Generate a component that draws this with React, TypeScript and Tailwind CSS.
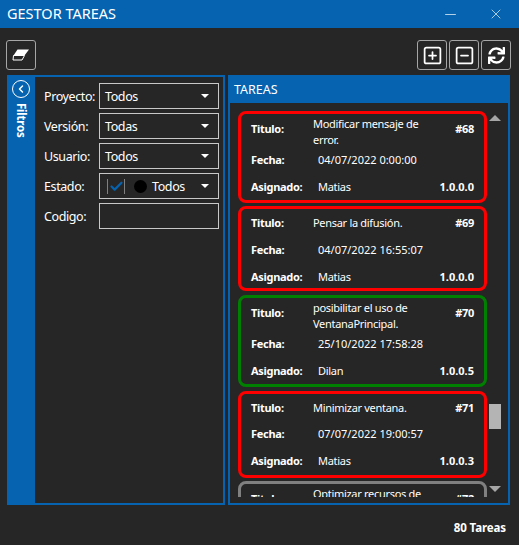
import { Check, ChevronLeft, Minus, SquareMinus, SquarePlus, X } from 'lucide-react'
import { FaSync } from 'react-icons/fa'

const tasks = [
  { title: 'Modificar mensaje de error.', id: '#68', date: '04/07/2022 0:00:00', user: 'Matias', version: '1.0.0.0', border: 'border-[#ff0000]', h: 'h-[92px]', first: 'h-[33px] pt-[7px]', titleClass: '-mt-[5px]', gap: 'mb-[3px]' },
  { title: 'Pensar la difusión.', id: '#69', date: '04/07/2022 16:55:07', user: 'Matias', version: '1.0.0.0', border: 'border-[#ff0000]', h: 'h-[85px]', first: 'h-[28px] pt-[6px]', titleClass: '', gap: 'mb-[4px]' },
  { title: 'posibilitar el uso de VentanaPrincipal.', id: '#70', date: '25/10/2022 17:58:28', user: 'Dilan', version: '1.0.0.5', border: 'border-[#008000]', h: 'h-[92px]', first: 'h-[33px] pt-[7px]', titleClass: '-mt-[5px]', gap: 'mb-[4px]' },
  { title: 'Minimizar ventana.', id: '#71', date: '07/07/2022 19:00:57', user: 'Matias', version: '1.0.0.3', border: 'border-[#ff0000]', h: 'h-[87px]', first: 'h-[27px] pt-[6px]', titleClass: '', gap: 'mb-[3px]' },
  { title: 'Optimizar recursos de sistema.', id: '#72', date: '07/07/2022 19:00:57', user: 'Matias', version: '1.0.0.3', border: 'border-[#808080]', h: 'h-[92px]', first: 'h-[33px] pt-[7px]', titleClass: '-mt-[5px]', gap: '' },
]

function Eraser() {
  return (
    <svg width="18" height="12" viewBox="0 0 18 12">
      <path d="M5.5 0.5H17L12.5 6.5H1.5Z" fill="#fff" />
      <path d="M1.5 6.5H12.5L10 11H1Z" fill="#262626" stroke="#fff" strokeWidth="1" />
    </svg>
  )
}

function ToolButton({ children }: { children: React.ReactNode }) {
  return (
    <button className="flex h-[30px] w-[30px] items-center justify-center rounded-[3px] border border-[#a6a6a6] bg-[#262626] text-white">
      {children}
    </button>
  )
}

function Field({ label, children }: { label: string; children: React.ReactNode }) {
  return (
    <div className="flex h-[30px] items-center">
      <span className="w-[55px] pt-[2px] text-[12.5px] tracking-[-0.4px] text-white">{label}</span>
      {children}
    </div>
  )
}

function Select({ value }: { value: string }) {
  return (
    <div className="flex h-[26px] w-[120px] items-center justify-between border border-[#c8c8c8] pr-[9px] pl-[5px] text-[12.5px] tracking-[-0.4px] text-white">
      <span className="pt-[2px]">{value}</span>
      <span className="h-0 w-0 border-x-[4px] border-t-[4px] border-x-transparent border-t-white" />
    </div>
  )
}

function TaskCard({ task }: { task: (typeof tasks)[number] }) {
  return (
    <div className={`${task.h} ${task.gap} ${task.border} shrink-0 rounded-[8px] border-[3px] pr-[10px] pl-[10px] text-[11px] tracking-[-0.3px] text-white`}>
      <div className={`${task.first} flex items-start`}>
        <span className="w-[62px] shrink-0 font-bold">Titulo:</span>
        <span className={`${task.titleClass} w-[115px] shrink-0 leading-[16px]`}>{task.title}</span>
        <span className="ml-auto font-bold">{task.id}</span>
      </div>
      <div className="flex h-[26px] items-center">
        <span className="w-[67px] shrink-0 font-bold">Fecha:</span>
        <span className="tracking-normal">{task.date}</span>
      </div>
      <div className="flex h-[29px] items-center">
        <span className="w-[67px] shrink-0 font-bold">Asignado:</span>
        <span>{task.user}</span>
        <span className="ml-auto font-bold tracking-normal">{task.version}</span>
      </div>
    </div>
  )
}

export default function App() {
  return (
    <div className="flex h-[545px] w-[519px] flex-col overflow-hidden bg-[#262626] font-['Noto_Sans',sans-serif]">
      <header className="flex h-[28px] shrink-0 items-center justify-between bg-[#0563af] pr-[15px] pl-[7px] text-white">
        <span className="text-[14.5px]">GESTOR TAREAS</span>
        <div className="flex items-center gap-[29px]">
          <Minus size={17} strokeWidth={1} />
          <X size={16} strokeWidth={1} />
        </div>
      </header>

      <div className="flex h-[47px] shrink-0 items-start justify-between pt-[12px] pr-[8px] pl-[6px]">
        <ToolButton>
          <Eraser />
        </ToolButton>
        <div className="flex gap-[2px]">
          <ToolButton>
            <SquarePlus size={21} strokeWidth={2} />
          </ToolButton>
          <ToolButton>
            <SquareMinus size={21} strokeWidth={2} />
          </ToolButton>
          <ToolButton>
            <FaSync size={17} />
          </ToolButton>
        </div>
      </div>

      <main className="flex h-[430px] shrink-0 gap-[3px] pr-[9px] pl-[7px]">
        <section className="flex w-[218px] border-2 border-[#0563af]">
          <div className="flex w-[26px] shrink-0 flex-col items-center bg-[#0563af] pt-[3px] pr-[2px] text-white">
            <span className="flex h-[18px] w-[18px] items-center justify-center rounded-full border-[1.5px] border-white">
              <ChevronLeft size={12} strokeWidth={3} />
            </span>
            <span className="mt-[5px] text-[11.5px] font-bold tracking-[-0.2px] [writing-mode:vertical-rl]">Filtros</span>
          </div>
          <div className="flex flex-1 flex-col pt-[4px] pl-[9px]">
            <Field label="Proyecto:"><Select value="Todos" /></Field>
            <Field label="Versión:"><Select value="Todas" /></Field>
            <Field label="Usuario:"><Select value="Todos" /></Field>
            <Field label="Estado:">
              <div className="flex h-[26px] w-[120px] items-center border border-[#c8c8c8] pr-[9px] pl-[7px] text-[12.5px] tracking-[-0.4px] text-white">
                <span className="flex h-[15px] w-[18px] items-center justify-center border-x border-[#808080]">
                  <Check size={15} strokeWidth={3.5} className="text-[#0563af]" />
                </span>
                <span className="ml-[9px] h-[13px] w-[13px] rounded-full bg-black" />
                <span className="ml-[5px] pt-[2px]">Todos</span>
                <span className="ml-auto h-0 w-0 border-x-[4px] border-t-[4px] border-x-transparent border-t-white" />
              </div>
            </Field>
            <Field label="Codigo:">
              <div className="h-[26px] w-[120px] border border-[#c8c8c8]" />
            </Field>
          </div>
        </section>

        <section className="flex flex-1 flex-col border-2 border-[#0563af]">
          <div className="flex h-[26px] shrink-0 items-center bg-[#0563af] pl-[4px] text-[12.5px] text-white">TAREAS</div>
          <div className="flex min-h-0 flex-1">
            <div className="mb-[6px] flex min-w-0 flex-1 flex-col overflow-hidden pt-[8px] pl-[8px]">
              {tasks.map((task) => (
                <TaskCard key={task.id} task={task} />
              ))}
            </div>
            <div className="flex w-[21px] shrink-0 flex-col items-start pt-[12px] pb-[11px] pl-[2px]">
              <span className="h-0 w-0 border-x-[6px] border-b-[6px] border-x-transparent border-b-[#a6a6a6]" />
              <div className="mt-[283px] h-[25px] w-[12px] bg-[#b4b4b4]" />
              <span className="mt-auto h-0 w-0 border-x-[6px] border-t-[6px] border-x-transparent border-t-[#a6a6a6]" />
            </div>
          </div>
        </section>
      </main>

      <footer className="flex flex-1 items-center justify-end pt-[6px] pr-[13px] text-[11.5px] font-bold tracking-[-0.1px] text-white">80 Tareas</footer>
    </div>
  )
}
